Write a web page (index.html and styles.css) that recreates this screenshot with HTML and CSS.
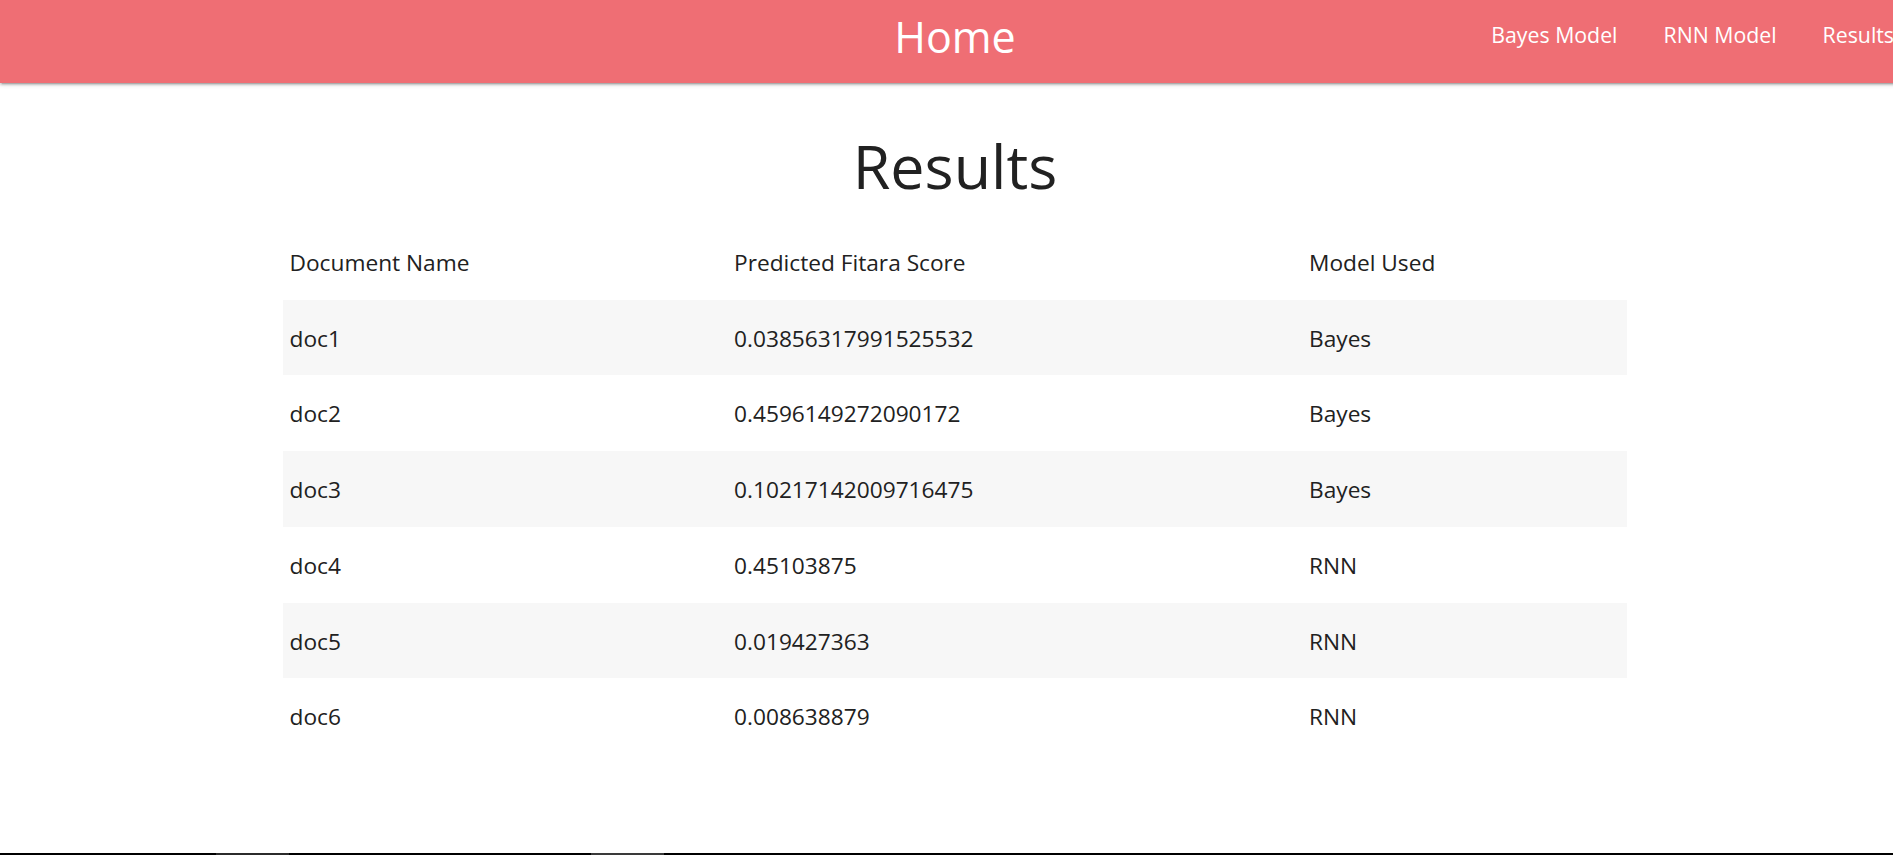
FILE: index.html
```html
<!DOCTYPE html>
<html lang="en">
<head>
<meta charset="utf-8">
<title>Results</title>
<link rel="stylesheet" href="styles.css">
</head>
<body>
<div class="page">
  <nav class="nav">
    <div class="nav-side"></div>
    <a class="brand" href="#">Home</a>
    <ul class="nav-links">
      <li><a href="#">Bayes Model</a></li>
      <li><a href="#">RNN Model</a></li>
      <li><a href="#">Results</a></li>
    </ul>
  </nav>
  <main class="container">
    <h1 class="title">Results</h1>
    <table class="results">
      <colgroup>
        <col class="col-name">
        <col class="col-score">
        <col class="col-model">
      </colgroup>
      <thead>
        <tr><th>Document Name</th><th>Predicted Fitara Score</th><th>Model Used</th></tr>
      </thead>
      <tbody>
        <tr><td>doc1</td><td>0.03856317991525532</td><td>Bayes</td></tr>
        <tr><td>doc2</td><td>0.4596149272090172</td><td>Bayes</td></tr>
        <tr><td>doc3</td><td>0.10217142009716475</td><td>Bayes</td></tr>
        <tr><td>doc4</td><td>0.45103875</td><td>RNN</td></tr>
        <tr><td>doc5</td><td>0.019427363</td><td>RNN</td></tr>
        <tr><td>doc6</td><td>0.008638879</td><td>RNN</td></tr>
      </tbody>
    </table>
  </main>
</div>
<div class="taskbar">
  <span class="tb-seg tb-seg-a"></span>
  <span class="tb-seg tb-seg-b"></span>
</div>
</body>
</html>
```
FILE: styles.css
```css
html, body {
  margin: 0;
  padding: 0;
  overflow: hidden;
  background: #ffffff;
}

body {
  font-family: "Open Sans", "Noto Sans", "Liberation Sans", sans-serif;
  color: #212121;
}

.page {
  width: 1910px;
}

.nav {
  height: 83px;
  background: #ef6e74;
  display: grid;
  grid-template-columns: 1fr auto 1fr;
  align-items: start;
  box-shadow: 0 2px 2px 0 rgba(0,0,0,0.14), 0 3px 1px -2px rgba(0,0,0,0.12), 0 1px 5px 0 rgba(0,0,0,0.2);
  position: relative;
  z-index: 1;
}

.brand {
  color: #ffffff;
  text-decoration: none;
  font-size: 43px;
  line-height: 73px;
  height: 83px;
  display: block;
}

.nav-links {
  list-style: none;
  margin: 0 -7px 0 0;
  padding: 0;
  display: flex;
  justify-content: flex-end;
  height: 83px;
}

.nav-links li {
  display: block;
}

.nav-links a {
  display: block;
  color: #ffffff;
  text-decoration: none;
  font-size: 21.3px;
  line-height: 70px;
  padding: 0 23px;
}

.container {
  width: 1344px;
  margin: 0 auto;
}

.title {
  margin: 51px 0 26px;
  font-size: 61px;
  font-weight: 400;
  line-height: 64px;
  text-align: center;
  color: #212121;
}

.results {
  width: 1344px;
  border-collapse: collapse;
  table-layout: fixed;
}

.col-name { width: 444.5px; }
.col-score { width: 575px; }
.col-model { width: 324.5px; }

.results th,
.results td {
  text-align: left;
  font-weight: 400;
  font-size: 22.7px;
  line-height: 35.7px;
  padding: 21px 6.5px 19px;
  color: #212121;
}

.results tbody tr:nth-child(odd) {
  background: #f7f7f7;
}

.taskbar {
  position: fixed;
  left: 0;
  right: 0;
  bottom: 0;
  height: 2.5px;
  background: #000000;
}

.tb-seg {
  position: absolute;
  top: 0;
  bottom: 0;
  background: #2b2b2b;
}

.tb-seg-a { left: 216px; width: 73px; }
.tb-seg-b { left: 591px; width: 73px; background: #3a3a3a; }
```
